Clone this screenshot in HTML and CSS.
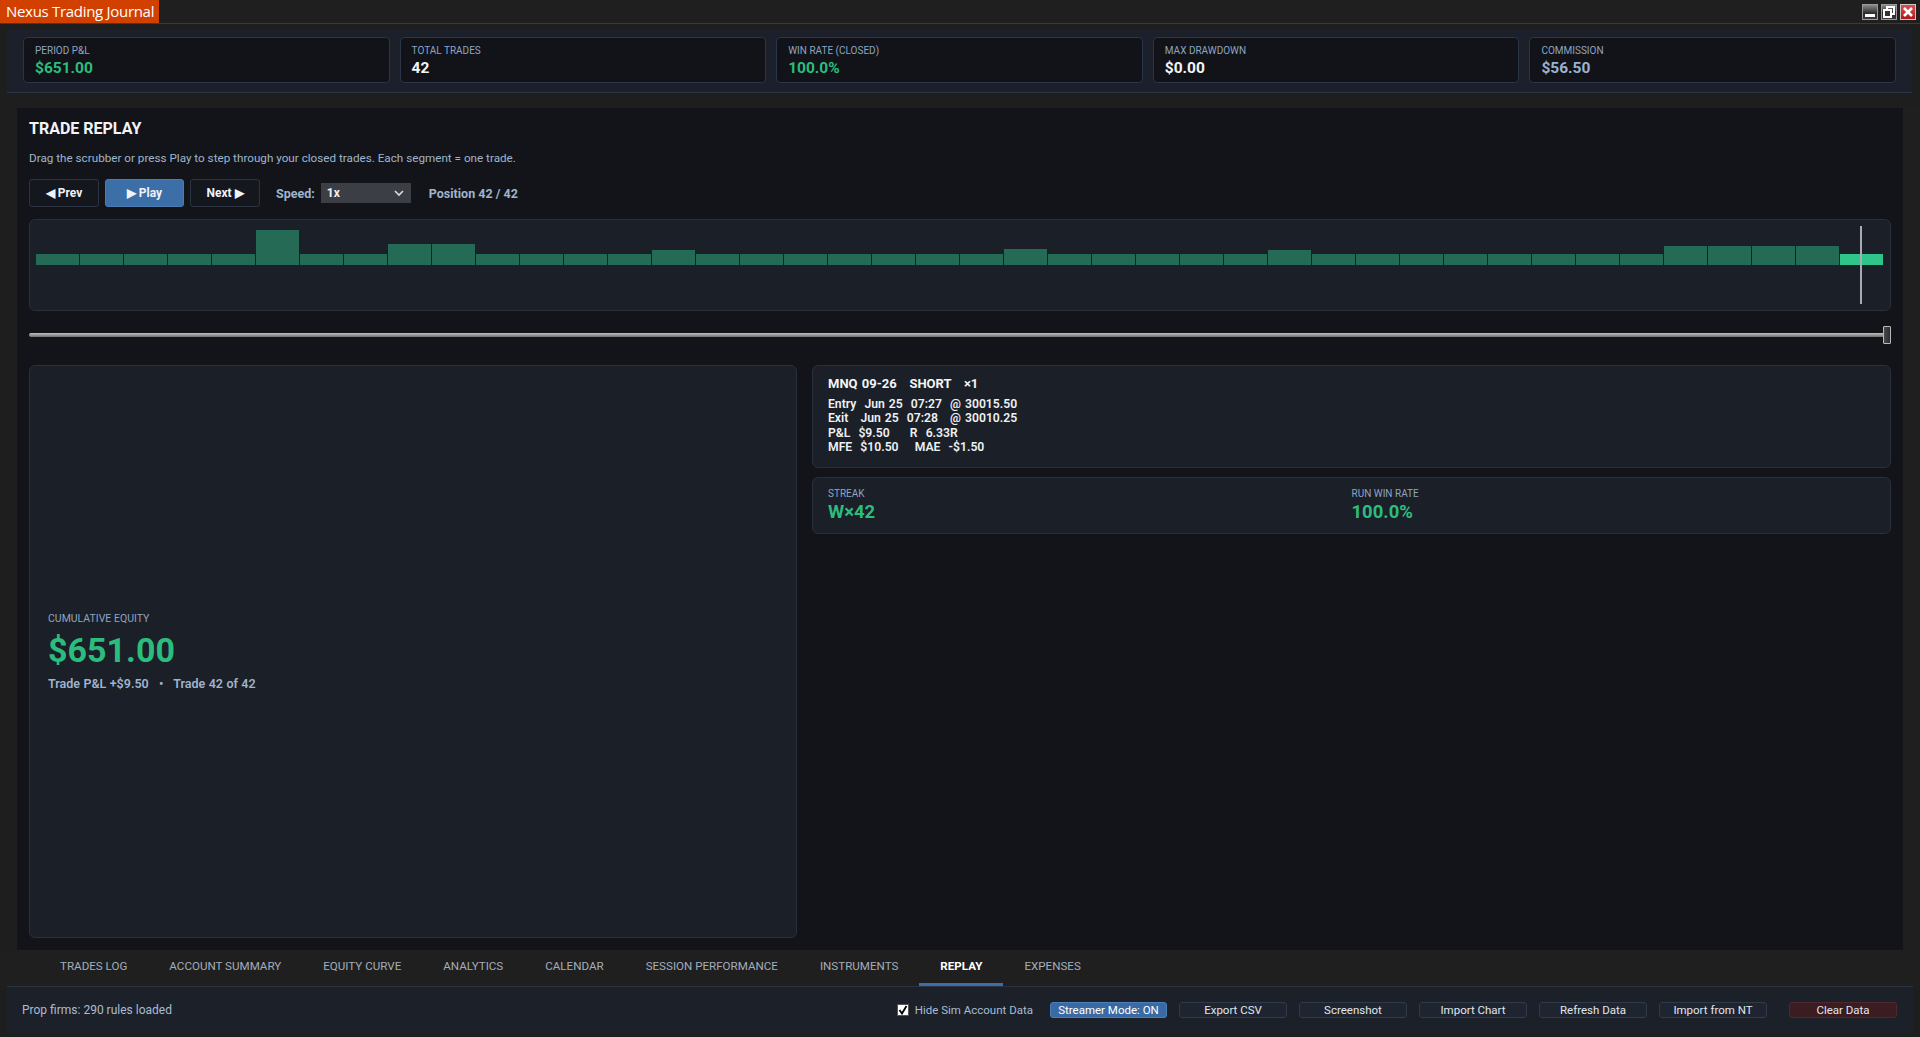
FILE: index.html
```html
<!DOCTYPE html>
<html lang="en">
<head>
    <meta charset="UTF-8">
    <meta name="viewport" content="width=device-width, initial-scale=1.0">
    <title>Nexus Trading Journal</title>
    <link rel="stylesheet" href="styles.css">
</head>
<body>
<div class="window">
    <div class="titlebar">
        <div class="app-title">Nexus Trading Journal</div>
        <div class="win-ctrls">
            <span class="win-btn">
                <svg width="14" height="14" viewBox="0 0 14 14"><rect x="2" y="9" width="10" height="3" fill="#fff"/></svg>
            </span>
            <span class="win-btn">
                <svg width="14" height="14" viewBox="0 0 14 14"><rect x="5" y="2" width="7" height="7" fill="none" stroke="#fff" stroke-width="2"/><rect x="2" y="5" width="7" height="7" fill="#333" stroke="#fff" stroke-width="2"/></svg>
            </span>
            <span class="win-btn close">
                <svg width="14" height="14" viewBox="0 0 14 14"><path d="M3 3 L11 11 M11 3 L3 11" stroke="#fff" stroke-width="2.6"/></svg>
            </span>
        </div>
    </div>

    <div class="stats-strip">
        <div class="stat-card">
            <div class="stat-label">PERIOD P&amp;L</div>
            <div class="stat-value green">$651.00</div>
        </div>
        <div class="stat-card">
            <div class="stat-label">TOTAL TRADES</div>
            <div class="stat-value">42</div>
        </div>
        <div class="stat-card">
            <div class="stat-label">WIN RATE (CLOSED)</div>
            <div class="stat-value green">100.0%</div>
        </div>
        <div class="stat-card">
            <div class="stat-label">MAX DRAWDOWN</div>
            <div class="stat-value">$0.00</div>
        </div>
        <div class="stat-card">
            <div class="stat-label">COMMISSION</div>
            <div class="stat-value muted">$56.50</div>
        </div>
    </div>

    <div class="main">
        <div class="content">
            <h2 class="section-title">TRADE REPLAY</h2>
            <p class="section-desc">Drag the scrubber or press Play to step through your closed trades. Each segment = one trade.</p>

            <div class="controls">
                <button class="ctl-btn prev">&#9664; Prev</button>
                <button class="ctl-btn play">&#9654; Play</button>
                <button class="ctl-btn next">Next &#9654;</button>
                <span class="speed-label">Speed:</span>
                <div class="speed-select">
                    <span>1x</span>
                    <svg width="10" height="7" viewBox="0 0 10 7"><path d="M1 1 L5 5 L9 1" fill="none" stroke="#d8dce2" stroke-width="1.6"/></svg>
                </div>
                <span class="position">Position 42 / 42</span>
            </div>

            <div class="replay-chart">
                <div class="bars" id="bars"></div>
                <div class="playhead"></div>
            </div>

            <div class="scrubber">
                <div class="track"></div>
                <div class="thumb"></div>
            </div>

            <div class="lower">
                <div class="equity-card">
                    <div class="equity-label">CUMULATIVE EQUITY</div>
                    <div class="equity-value">$651.00</div>
                    <div class="equity-sub">Trade P&amp;L +$9.50 &nbsp;&nbsp;•&nbsp;&nbsp; Trade 42 of 42</div>
                </div>
                <div class="side">
                    <div class="trade-card">
                        <div class="trade-title">MNQ 09-26   SHORT   ×1</div>
                        <div class="trade-line">Entry  Jun 25  07:27  @ 30015.50</div>
                        <div class="trade-line">Exit   Jun 25  07:28   @ 30010.25</div>
                        <div class="trade-line">P&amp;L  $9.50     R  6.33R</div>
                        <div class="trade-line">MFE  $10.50    MAE  -$1.50</div>
                    </div>
                    <div class="streak-card">
                        <div>
                            <div class="stat-label">STREAK</div>
                            <div class="streak-value">W×42</div>
                        </div>
                        <div>
                            <div class="stat-label">RUN WIN RATE</div>
                            <div class="streak-value">100.0%</div>
                        </div>
                    </div>
                </div>
            </div>
        </div>
        <div class="vscroll"></div>
    </div>

    <div class="tabbar">
        <span class="tab">TRADES LOG</span>
        <span class="tab">ACCOUNT SUMMARY</span>
        <span class="tab">EQUITY CURVE</span>
        <span class="tab">ANALYTICS</span>
        <span class="tab">CALENDAR</span>
        <span class="tab">SESSION PERFORMANCE</span>
        <span class="tab">INSTRUMENTS</span>
        <span class="tab active">REPLAY</span>
        <span class="tab">EXPENSES</span>
    </div>

    <div class="statusbar">
        <span class="status-text">Prop firms: 290 rules loaded</span>
        <div class="status-actions">
            <label class="check">
                <span class="box"><svg width="10" height="10" viewBox="0 0 10 10"><path d="M1.5 5 L4 8.5 L8.5 1" fill="none" stroke="#000" stroke-width="1.8"/></svg></span>
                Hide Sim Account Data
            </label>
            <button class="sbtn streamer">Streamer Mode: ON</button>
            <button class="sbtn">Export CSV</button>
            <button class="sbtn">Screenshot</button>
            <button class="sbtn">Import Chart</button>
            <button class="sbtn">Refresh Data</button>
            <button class="sbtn">Import from NT</button>
            <button class="sbtn danger">Clear Data</button>
        </div>
    </div>
</div>

<script>
    // bar heights per closed trade (px)
    const heights = [11, 11, 11, 11, 11, 35, 11, 11, 21, 21,
                     11, 11, 11, 11, 15, 11, 11, 11, 11, 11,
                     11, 11, 16, 11, 11, 11, 11, 11, 15, 11,
                     11, 11, 11, 11, 11, 11, 11, 19, 19, 19,
                     19, 11];
    const bars = document.getElementById('bars');
    heights.forEach(function (h, i) {
        const seg = document.createElement('div');
        seg.className = 'seg' + (i === heights.length - 1 ? ' current' : '');
        seg.style.height = h + 'px';
        bars.appendChild(seg);
    });
</script>
</body>
</html>
```

FILE: styles.css
```css
* {
    box-sizing: border-box;
}
body {
    margin: 0;
    background-color: #1e1e1e;
    font-family: Roboto, "Noto Sans", Arial, sans-serif;
    color: #e6e9ef;
    overflow: hidden;
}
button {
    font-family: inherit;
}
.window {
    height: 100vh;
    display: flex;
    flex-direction: column;
    padding-bottom: 4px;
}

/* title bar */
.titlebar {
    height: 24px;
    display: flex;
    justify-content: space-between;
    background-color: #1f1f1f;
    border-bottom: 1px solid #3a3a3a;
}
.app-title {
    width: 159px;
    background-color: #d24000;
    color: #fff;
    font-family: "Open Sans", "Noto Sans", sans-serif;
    font-size: 15px;
    line-height: 23px;
    padding-left: 6px;
    letter-spacing: -0.3px;
    white-space: nowrap;
}
.win-ctrls {
    display: flex;
    gap: 3px;
    padding: 4px 4px 0 0;
}
.win-btn {
    width: 16px;
    height: 16px;
    border: 1px solid #9a9a9a;
    background: linear-gradient(#8a8a8a, #2a2a2a 60%, #3a3a3a);
    display: flex;
    align-items: center;
    justify-content: center;
}
.win-btn.close {
    background: linear-gradient(#e05050, #b01818);
    border-color: #c8c8c8;
}

/* stats strip */
.stats-strip {
    margin: 6px 8px 0 7px;
    height: 63px;
    padding: 7px 16px 0 16px;
    background-color: #1b202a;
    border-bottom: 1px solid #2c3544;
    display: grid;
    grid-template-columns: repeat(5, 1fr);
    gap: 10px;
}
.stat-card {
    height: 46px;
    background-color: #121318;
    border: 1px solid #2c3547;
    border-radius: 4px;
    padding: 6px 11px;
}
.stat-label {
    font-size: 10px;
    color: #8ea4c2;
    line-height: 13px;
}
.stat-value {
    font-size: 15.5px;
    font-weight: 700;
    color: #f2f4f8;
    line-height: 19px;
    margin-top: 2px;
}
.green {
    color: #2bbd7e;
}
.muted {
    color: #9ab2d0;
}

/* main replay panel */
.main {
    flex: 1;
    display: flex;
    margin-top: 15px;
    padding-left: 17px;
}
.content {
    flex: 1;
    background-color: #131419;
    padding: 12px 12px 12px 12px;
    display: flex;
    flex-direction: column;
}
.vscroll {
    width: 17px;
    background-color: #1f1f1f;
}
.section-title {
    margin: 0;
    font-size: 16px;
    font-weight: 700;
    line-height: 18px;
    color: #f2f4f8;
}
.section-desc {
    margin: 13px 0 0 0;
    font-size: 11.7px;
    line-height: 14px;
    color: #9fb4cc;
}
.controls {
    margin-top: 14px;
    display: flex;
    align-items: center;
    height: 28px;
}
.ctl-btn {
    height: 28px;
    border: 1px solid #2c3340;
    border-radius: 3px;
    background-color: #14171d;
    color: #f0f2f6;
    font-size: 12px;
    font-weight: 700;
    cursor: pointer;
    margin-right: 6px;
}
.ctl-btn.prev {
    width: 70px;
}
.ctl-btn.play {
    width: 79px;
    background-color: #3c6ea7;
    border-color: #4a7cb4;
}
.ctl-btn.next {
    width: 70px;
}
.speed-label {
    margin-left: 10px;
    font-size: 12.5px;
    font-weight: 700;
    color: #9fb4cc;
}
.speed-select {
    margin-left: 6px;
    width: 90px;
    height: 20px;
    background-color: #3b3e45;
    color: #f0f2f6;
    font-size: 12px;
    font-weight: 700;
    display: flex;
    align-items: center;
    justify-content: space-between;
    padding: 0 7px 0 6px;
}
.position {
    margin-left: 18px;
    font-size: 12.5px;
    font-weight: 700;
    color: #9fb4cc;
}

.replay-chart {
    position: relative;
    margin-top: 12px;
    height: 92px;
    background-color: #1b1f27;
    border: 1px solid #2a2f3a;
    border-radius: 6px;
    padding: 0 7px 0 6px;
}
.bars {
    height: 45px;
    display: flex;
    align-items: flex-end;
}
.seg {
    flex: 1;
    background-color: #256a54;
    margin-right: 1px;
}
.seg.current {
    background-color: #2ec48a;
    margin-right: 0;
}
.playhead {
    position: absolute;
    right: 28px;
    top: 6px;
    width: 2px;
    height: 78px;
    background-color: #a7abb3;
}

.scrubber {
    margin-top: 15px;
    height: 18px;
    display: flex;
    align-items: center;
}
.track {
    flex: 1;
    height: 4px;
    background: linear-gradient(#c0c0c0, #6e6e6e);
    border-radius: 2px;
}
.thumb {
    width: 8px;
    height: 18px;
    margin-left: -2px;
    background: linear-gradient(90deg, #4a4a4a, #2c2c2c);
    border: 1px solid #b8b8b8;
    border-radius: 1px;
}

.lower {
    flex: 1;
    margin-top: 21px;
    display: grid;
    grid-template-columns: 768px 1fr;
    gap: 15px;
}
.equity-card {
    background-color: #1b1f27;
    border: 1px solid #2a2f3a;
    border-radius: 6px;
    padding: 0 18px;
    display: flex;
    flex-direction: column;
    justify-content: center;
}
.equity-label {
    font-size: 10.5px;
    color: #8ea4c2;
    line-height: 14px;
}
.equity-value {
    font-size: 34px;
    font-weight: 700;
    color: #2bbd7e;
    line-height: 40px;
    margin-top: 4px;
}
.equity-sub {
    margin-top: 6px;
    font-size: 12.5px;
    font-weight: 600;
    color: #9fb4cc;
    line-height: 16px;
    word-spacing: 0.3px;
}
.side {
    display: flex;
    flex-direction: column;
    gap: 9px;
}
.trade-card {
    background-color: #1b1f27;
    border: 1px solid #2a2f3a;
    border-radius: 6px;
    padding: 10px 15px 12px;
    height: 103px;
}
.trade-title {
    white-space: pre;
    font-size: 13px;
    font-weight: 700;
    line-height: 16px;
    color: #f2f4f8;
    margin-bottom: 5px;
    word-spacing: 1px;
}
.trade-line {
    white-space: pre;
    font-size: 12.2px;
    font-weight: 600;
    line-height: 14.3px;
    color: #eef1f5;
    word-spacing: 1px;
}
.streak-card {
    height: 57px;
    background-color: #1b1f27;
    border: 1px solid #2a2f3a;
    border-radius: 6px;
    padding: 9px 15px;
    display: grid;
    grid-template-columns: 1fr 1fr;
}
.streak-value {
    font-size: 18.5px;
    font-weight: 700;
    color: #2bbd7e;
    line-height: 22px;
    margin-top: 1px;
}

/* tabs */
.tabbar {
    height: 36px;
    display: flex;
    padding-left: 39px;
    background-color: #1f1f1f;
}
.tab {
    padding: 0 21px;
    font-size: 11.6px;
    line-height: 33px;
    color: #a3adbb;
    border-bottom: 3px solid transparent;
}
.tab.active {
    color: #fff;
    font-weight: 700;
    border-bottom-color: #3c6ea7;
}

/* status bar */
.statusbar {
    height: 47px;
    margin: 0 7px;
    background-color: #1c2029;
    border-top: 1px solid #2b3240;
    display: flex;
    align-items: center;
    justify-content: space-between;
    padding: 0 16px 0 15px;
}
.status-text {
    font-size: 12px;
    color: #a8bcd4;
}
.status-actions {
    display: flex;
    align-items: center;
    gap: 12px;
}
.check {
    display: flex;
    align-items: center;
    gap: 6px;
    font-size: 11.5px;
    color: #a8bcd4;
    margin-right: 5px;
}
.check .box {
    width: 12px;
    height: 12px;
    background-color: #fff;
    border: 1px solid #555;
    display: flex;
    align-items: center;
    justify-content: center;
}
.sbtn {
    width: 108px;
    height: 16px;
    padding: 0;
    background-color: #1e2430;
    border: 1px solid #313a49;
    border-radius: 3px;
    color: #e1e6ee;
    font-size: 11.5px;
    line-height: 14px;
}
.sbtn.streamer {
    width: 117px;
    background-color: #3a6aa3;
    border-color: #4d7fb8;
    color: #fff;
}
.sbtn.danger {
    margin-left: 10px;
    background-color: #3b1c20;
    border-color: #4e2a2e;
}
```
